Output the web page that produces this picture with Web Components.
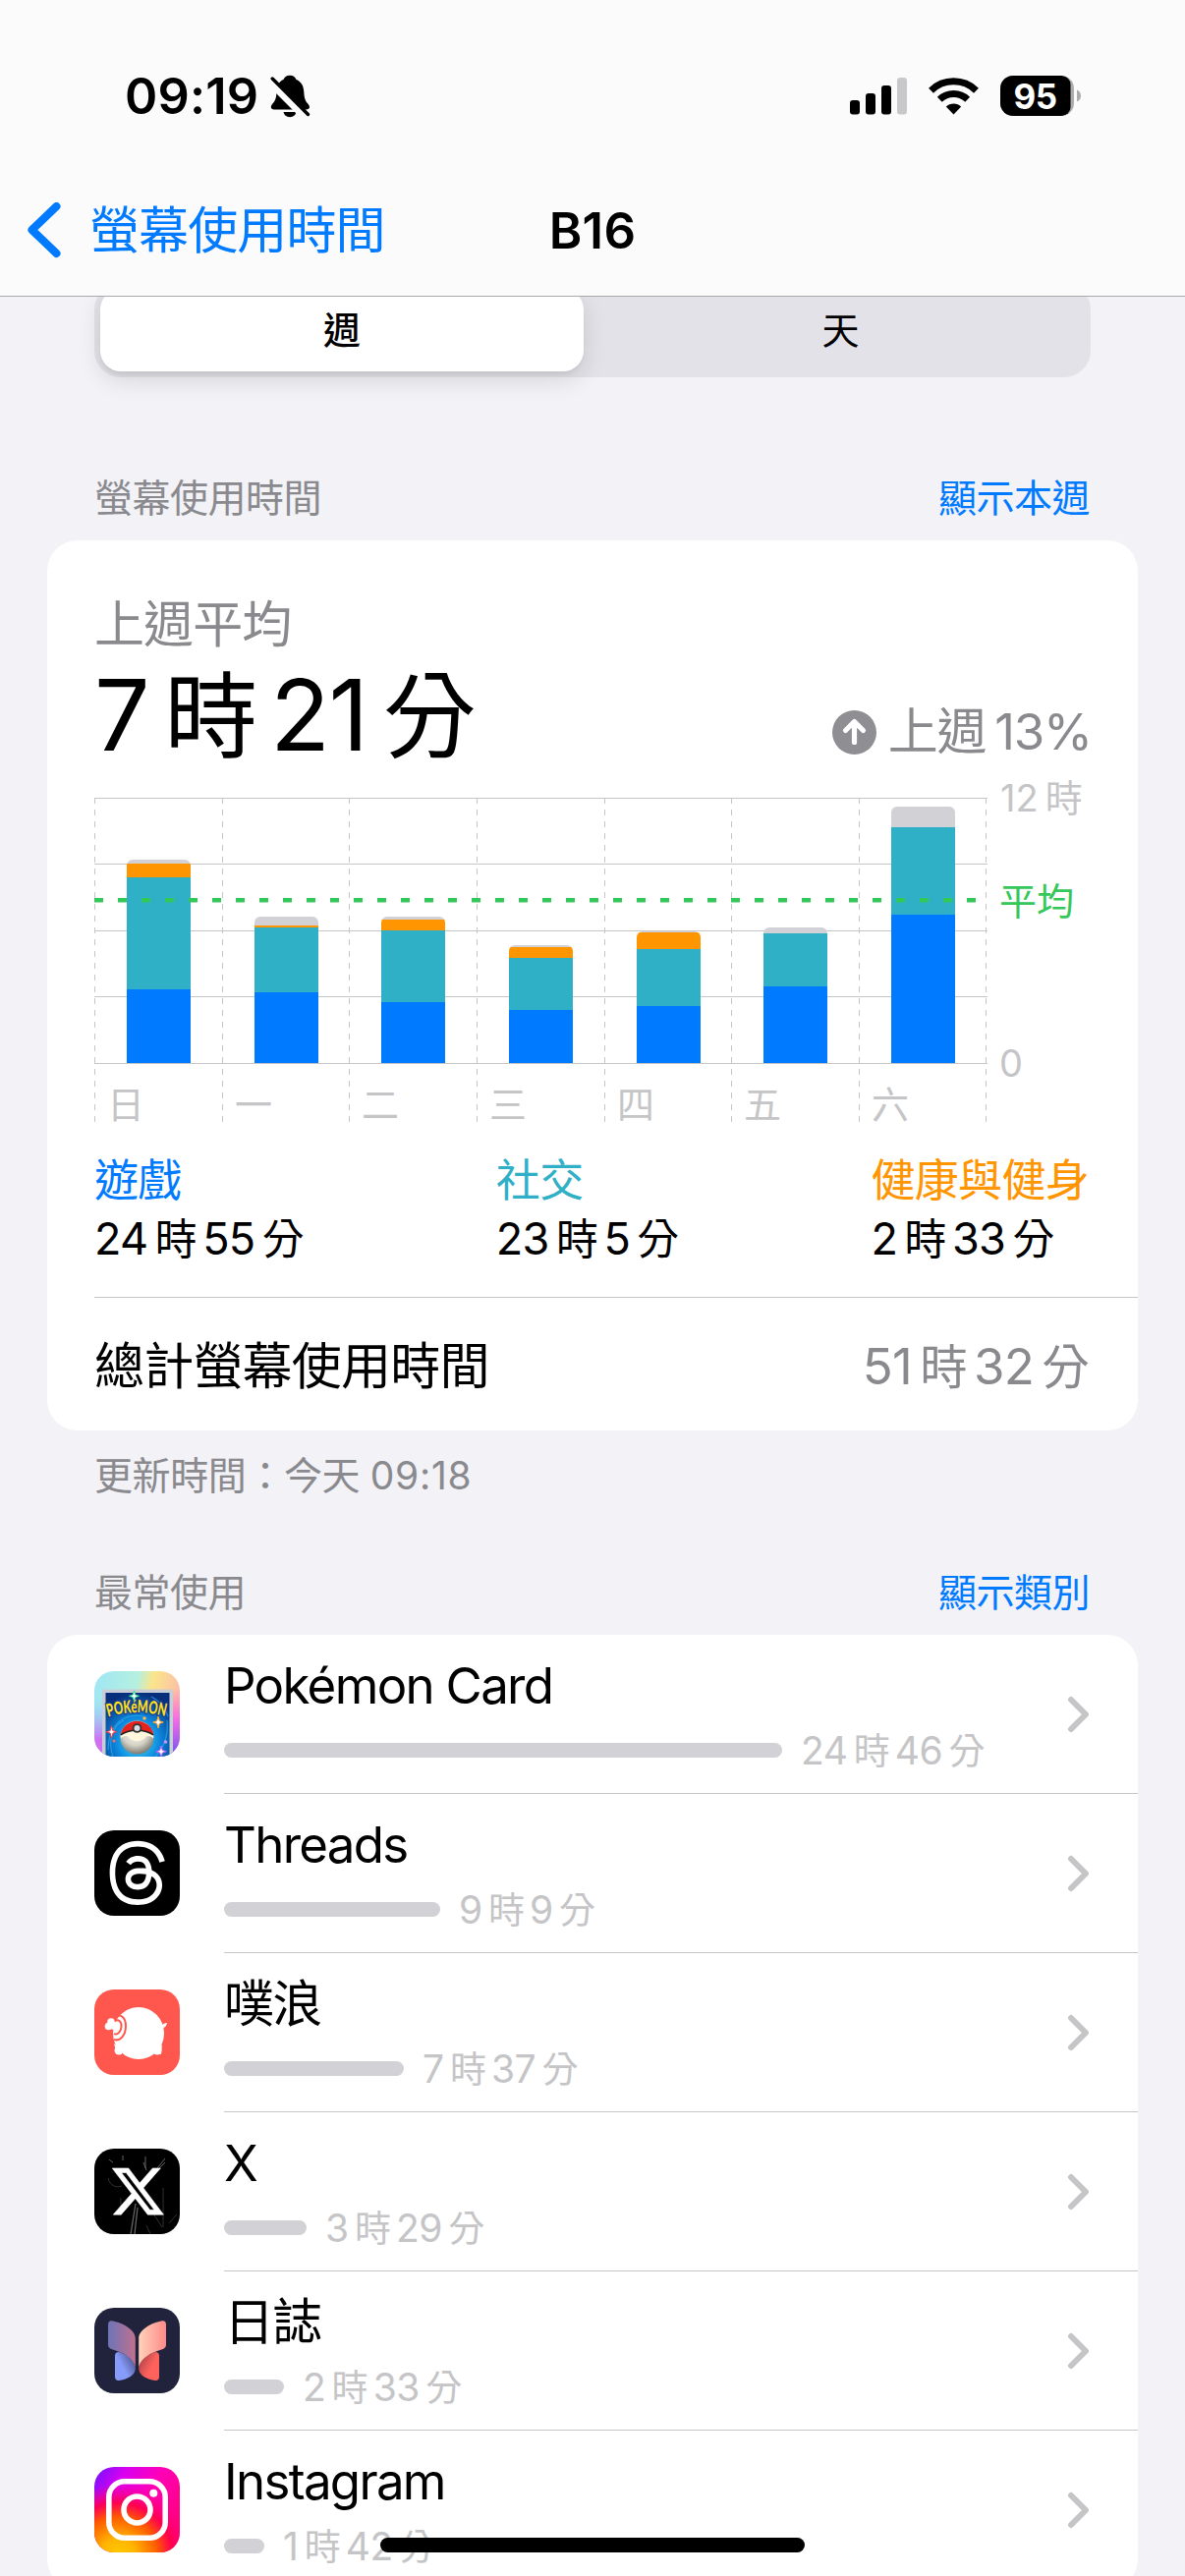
<!DOCTYPE html>
<html lang="zh-Hant">
<head>
<meta charset="utf-8">
<title>B16</title>
<style>
    :root {
        --blue: #007aff;
        --teal: #30b0c7;
        --orange: #ff9500;
        --green: #34c759;
        --fill: #d1d1d6;
        --label: #000;
        --secondary: #8a8a8e;
        --tertiary: #c5c5c7;
        --separator: #c6c6c8;
    }

    body {
        margin: 0;
        width: 1206px;
        height: 2622px;
        overflow: hidden;
        background: #f2f2f7;
        color: var(--label);
        font-family: Inter, "Noto Sans CJK TC", sans-serif;
        font-size: 51px;
        -webkit-font-smoothing: antialiased;
    }
</style>
</head>
<body>
<screen-time-page></screen-time-page>

<script>
/**
 * Base class: attaches an open shadow root and fills it with render()
 */
class BaseElement extends HTMLElement {
    constructor() {
        super();
        this.attachShadow({ mode: 'open' });
    }

    connectedCallback() {
        this.shadowRoot.innerHTML = this.render();
    }
}

/**
 * Duration such as 7時21分, with a little air round the units
 */
class DurationText extends BaseElement {
    render() {
        const [hours, minutes] = this.getAttribute('value').split(':');
        return `
            <style>
                :host { display: block; white-space: nowrap; }
                .unit { font-size: 0.95em; line-height: 1; margin: 0 0.15em 0 0.17em; }
                .unit:last-child { margin-right: 0; }
            </style>${hours}<span class="unit">時</span>${minutes}<span class="unit">分</span>`;
    }
}

class StatusBar extends BaseElement {
    render() {
        return `
            <style>
                :host {
                    display: flex;
                    justify-content: space-between;
                    align-items: center;
                    height: 195px;
                    padding: 0 106px 0 127px;
                    box-sizing: border-box;
                }
                .left, .right { display: flex; align-items: center; }
                .left { gap: 12px; }
                .time { font-weight: 600; font-size: 50.500px; line-height: 60px; letter-spacing: 0.200px; }
                .right { gap: 22px; }
                svg { display: block; }
                .battery { font: 700 35px Inter, sans-serif; letter-spacing: -0.5px; }
            </style>
            <div class="left">
                <span class="time">09:19</span>
                <svg width="41" height="44" viewBox="0 0 41 44">
                    <path d="M20 .8c3.600 0 5.800 2 6.500 4.300 5 2 7.500 6.200 7.800 12.400.3 7 1.700 9.500 4.200 12.300 2.700 3.200 1.500 5.700-2 5.700H4.200c-3.500 0-4.500-2.500-2-5.700 2.600-2.800 4-5.300 4.200-12.300C6.700 11.300 8.600 7.100 13.500 5.100 14.200 2.800 16.400.8 20 .8z"/>
                    <path d="M13.500 38h13c-.6 3-3 5.200-6.500 5.200s-5.900-2.200-6.500-5.200z"/>
                    <path d="M-.8 6.500L37.500 44.800" stroke="#fbfbfc" stroke-width="8"/>
                    <path d="M2.200 4L38.500 40.500" stroke="#000" stroke-width="3.400" stroke-linecap="round"/>
                </svg>
            </div>
            <div class="right">
                <svg width="58" height="38" viewBox="0 0 58 38">
                    <rect x="0" y="23" width="10" height="14.500" rx="3"/>
                    <rect x="16" y="16" width="10" height="21.500" rx="3"/>
                    <rect x="32" y="8" width="10" height="29.500" rx="3"/>
                    <rect x="48" y="0" width="10" height="37.500" rx="3" fill="#c8c8ca"/>
                </svg>
                <svg width="51" height="38" viewBox="0 0 51 38">
                    <g fill="none" stroke="#000" stroke-width="7">
                        <path d="M2.500 13.200a33 33 0 0 1 46 0"/>
                        <path d="M11.300 22.300a20.500 20.500 0 0 1 28.400 0"/>
                    </g>
                    <path d="M25.500 37.500L17.800 29.600a11 11 0 0 1 15.400 0z"/>
                </svg>
                <svg class="battery" width="82" height="42" viewBox="0 0 82 42">
                    <clipPath id="cell"><rect width="75" height="41" rx="13"/></clipPath>
                    <g clip-path="url(#cell)">
                        <rect width="75" height="41" fill="#acacae"/>
                        <rect x="-20" width="91.500" height="41" rx="9"/>
                    </g>
                    <path d="M78 14.500c2.500 1 4 3.200 4 6s-1.500 5-4 6z" fill="#acacae"/>
                    <text x="35.500" y="33.500" text-anchor="middle" fill="#fff">95</text>
                </svg>
            </div>`;
    }
}

class NavBar extends BaseElement {
    render() {
        return `
            <style>
                :host {
                    display: grid;
                    grid-template-columns: 1fr auto 1fr;
                    align-items: center;
                    height: 106px;
                    padding: 0 27px 26px;
                    box-sizing: border-box;
                    line-height: 60px;
                }
                .back { display: flex; align-items: center; gap: 29px; color: var(--blue); letter-spacing: -0.9px; }
                .title { font-weight: 600; letter-spacing: 0.300px; }
                svg { display: block; }
            </style>
            <div class="back">
                <svg width="35" height="58" viewBox="0 0 35 58">
                    <path d="M30.500 4L5.500 28 30.500 52" fill="none" stroke="currentColor" stroke-width="8" stroke-linecap="round" stroke-linejoin="round"/>
                </svg>
                <slot name="back"></slot>
            </div>
            <div class="title"><slot></slot></div>`;
    }
}

class SegmentedControl extends BaseElement {
    render() {
        return `
            <style>
                :host {
                    display: grid;
                    grid-template-columns: 492px 1fr;
                    height: 96px;
                    padding: 6px;
                    box-sizing: border-box;
                    border-radius: 27px;
                    background: #e3e2e8;
                    font-size: 38px;
                    line-height: 84px;
                    text-align: center;
                }
                .segment { margin-left: 13px; }
                .selected {
                    border-radius: 21px;
                    background: #fff;
                    box-shadow: 0 9px 24px rgba(0, 0, 0, 0.12), 0 3px 3px rgba(0, 0, 0, 0.04);
                    font-weight: 500;
                }
            </style>
            <div class="selected"><slot name="selected"></slot></div>
            <div class="segment"><slot></slot></div>`;
    }
}

class SectionHeader extends BaseElement {
    render() {
        return `
            <style>
                :host {
                    display: flex;
                    justify-content: space-between;
                    padding: 0 97px 13px 96px;
                    font-size: 39px;
                    line-height: 60px;
                    letter-spacing: -0.5px;
                    color: var(--secondary);
                }
                .link { color: var(--blue); }
            </style>
            <slot></slot>
            <span class="link"><slot name="link"></slot></span>`;
    }
}

class GroupCard extends BaseElement {
    render() {
        return `
            <style>
                :host {
                    display: block;
                    margin: 0 48px;
                    border-radius: 31px;
                    background: #fff;
                    overflow: hidden;
                }
            </style>
            <slot></slot>`;
    }
}

/**
 * Stacked bars for one week. Each day lists the tops of its segments
 * in pixels above the baseline: games, social, health, other.
 */
class WeekChart extends BaseElement {
    render() {
        const days = [
            ['日', 75, 189, 203, 207],
            ['一', 72, 138, 140, 149],
            ['二', 62, 135, 146, 149],
            ['三', 54, 107, 118, 120],
            ['四', 58, 116, 133, 134],
            ['五', 78, 132, 132, 138],
            ['六', 151, 240, 240, 261]
        ];
        const colors = ['var(--blue)', 'var(--teal)', 'var(--orange)', 'var(--fill)'];
        const base = 295;
        const step = 129.64;

        const rows = [25, 92, 160, 227, 295]
            .map((y) => `<path d="M0 ${y + 0.5}H909"/>`).join('');
        const columns = Array.from({ length: 8 }, (_, i) => {
            const x = Math.round(i * step) + 0.5;
            return `<path d="M${x} 25V355" stroke-dasharray="6 6"/>`;
        }).join('');

        const bars = days.map(([name, ...tops], i) => {
            const x = Math.round(i * step) + 33;
            const height = tops[3];
            const parts = tops.map((top, n) => {
                const from = n ? tops[n - 1] : 0;
                return `<rect x="${x}" y="${base - top}" width="65" height="${top - from}" fill="${colors[n]}"/>`;
            }).join('');
            return `
                <clipPath id="bar${i}"><rect x="${x}" y="${base - height}" width="65" height="${height + 8}" rx="6"/></clipPath>
                <g clip-path="url(#bar${i})">${parts}</g>
                <text x="${x - 20}" y="351">${name}</text>`;
        }).join('');

        return `
            <style>
                :host { display: block; height: 360px; }
                svg { display: block; font-size: 38px; fill: var(--tertiary); }
                .average { fill: var(--green); }
            </style>
            <svg width="1062" height="360" viewBox="0 0 1062 360">
                <g stroke="var(--separator)">${rows}${columns}</g>
                ${bars}
                <path d="M0 129.200H900" stroke="var(--green)" stroke-width="4.500" stroke-dasharray="9 15"/>
                <text x="922" y="39">12<tspan dx="7">時</tspan></text>
                <text x="921" y="144" class="average">平均</text>
                <text x="921" y="309">0</text>
            </svg>`;
    }
}

class CategoryTotal extends BaseElement {
    render() {
        return `
            <style>
                :host { display: block; font-size: 45px; }
                .name { line-height: 54px; margin-bottom: 2px; letter-spacing: -0.7px; color: var(--category); }
                duration-text { line-height: 60px; letter-spacing: -0.7px; }
            </style>
            <div class="name"><slot></slot></div>
            <duration-text value="${this.getAttribute('value')}"></duration-text>`;
    }
}

class UsageSummary extends BaseElement {
    render() {
        return `
            <style>
                :host { display: block; padding: 56px 0 0 48px; }
                .caption { line-height: 60px; letter-spacing: -0.9px; color: var(--secondary); }
                .headline {
                    display: flex;
                    justify-content: space-between;
                    align-items: flex-end;
                    height: 121px;
                    padding-right: 47px;
                }
                .average { font-size: 100px; line-height: 118px; letter-spacing: -1.500px; }
                .trend {
                    display: flex;
                    align-items: center;
                    gap: 12px;
                    margin-bottom: 12px;
                    line-height: 60px;
                    letter-spacing: -1.200px;
                    color: var(--secondary);
                }
                .trend b { font-weight: 400; margin-left: 9px; }
                .totals {
                    display: flex;
                    justify-content: space-between;
                    padding-right: 50px;
                    margin: 28px 0 29px;
                }
                .total {
                    display: flex;
                    justify-content: space-between;
                    height: 136px;
                    padding: 4px 50px 0 0;
                    box-sizing: border-box;
                    border-top: 1px solid var(--separator);
                    line-height: 132px;
                    letter-spacing: -0.8px;
                }
                .total duration-text { color: var(--secondary); }
            </style>
            <div class="caption">上週平均</div>
            <div class="headline">
                <duration-text class="average" value="7:21"></duration-text>
                <div class="trend">
                    <svg width="45" height="45" viewBox="0 0 45 45">
                        <circle cx="22.500" cy="22.500" r="22.500" fill="#8e8e93"/>
                        <path d="M22.500 32.500V12M13.500 20.500l9-9 9 9" fill="none" stroke="#fff" stroke-width="5.200" stroke-linecap="round" stroke-linejoin="round"/>
                    </svg>
                    <span>上週<b>13%</b></span>
                </div>
            </div>
            <week-chart></week-chart>
            <div class="totals">
                <category-total value="24:55" style="--category: var(--blue)">遊戲</category-total>
                <category-total value="23:5" style="--category: var(--teal)">社交</category-total>
                <category-total value="2:33" style="--category: var(--orange)">健康與健身</category-total>
            </div>
            <div class="total">
                <span>總計螢幕使用時間</span>
                <duration-text value="51:32"></duration-text>
            </div>`;
    }
}

const ICONS = {
    pokemon: `
        <defs>
            <linearGradient id="holo" x1="0" y1="0" x2="1" y2="0.200">
                <stop offset="0" stop-color="#9fe6f5"/><stop offset="0.500" stop-color="#b4f0e0"/>
                <stop offset="0.680" stop-color="#fbe58a"/><stop offset="1" stop-color="#fbc0a8"/>
            </linearGradient>
            <linearGradient id="edge" x1="0" y1="0" x2="0" y2="1">
                <stop offset="0.200" stop-color="#ff5fd0" stop-opacity="0"/><stop offset="0.550" stop-color="#f05cf0" stop-opacity="0.800"/>
                <stop offset="1" stop-color="#6a50f0"/>
            </linearGradient>
            <linearGradient id="edge2" x1="0" y1="0" x2="0" y2="1">
                <stop offset="0.300" stop-color="#7fd0ff" stop-opacity="0"/><stop offset="0.800" stop-color="#d070f0"/>
            </linearGradient>
            <radialGradient id="sky" cx="0.500" cy="0.700" r="0.700">
                <stop offset="0" stop-color="#3fe0ff"/><stop offset="0.500" stop-color="#0d86dc"/><stop offset="1" stop-color="#08307c"/>
            </radialGradient>
            <radialGradient id="ball" cx="0.450" cy="0.350" r="0.700">
                <stop offset="0" stop-color="#fff"/><stop offset="0.550" stop-color="#d5d2c6"/><stop offset="1" stop-color="#6d6a62"/>
            </radialGradient>
        </defs>
        <rect width="87" height="87" fill="url(#holo)"/>
        <rect width="12" height="87" fill="url(#edge2)"/>
        <rect x="74" width="13" height="87" fill="url(#edge)"/>
        <rect x="8" y="18.500" width="72" height="75" rx="3" fill="#c9ced6"/>
        <rect x="11.500" y="22" width="65" height="70" fill="url(#sky)"/>
        <g fill="none" stroke="#35b8f5" stroke-width="1.200" opacity="0.600">
            <path d="M14 80C14 55 30 42 50 46"/><path d="M74 50C76 70 68 80 60 90"/><path d="M20 90C12 70 20 55 30 50"/><path d="M58 26c8 4 14 10 17 20"/>
        </g>
        <circle cx="43.500" cy="67.500" r="17" fill="url(#ball)"/>
        <path d="M26.800 64.500a17 17 0 0 1 33.400 0c-8-5.500-25-5.500-33.400 0z" fill="#e8221c"/>
        <path d="M26.600 65.500c8-6.500 26-6.500 33.800 0l-.3 3c-4-3-6-3-8-1-5 5-12 5-17 0-2-2-5-2-8.200 1z" fill="#fff8dc"/>
        <path d="M26.800 65c8-6.500 25-6.500 33.400 0" fill="none" stroke="#222" stroke-width="1.500"/>
        <circle cx="43.500" cy="58" r="4.800" fill="#333"/><circle cx="43.500" cy="58" r="3" fill="#d8dee4"/>
        <path id="arc" d="M14 46.500Q43 38 74 46.500" fill="none"/>
        <text font-family="Lato, sans-serif" font-weight="900" font-size="18" fill="#ffdf1c" stroke="#173a8c" stroke-width="2.400" paint-order="stroke" textLength="59" lengthAdjust="spacingAndGlyphs"><textPath href="#arc" textLength="59" lengthAdjust="spacingAndGlyphs">POKéMON</textPath></text>
        <g fill="#fff" stroke-width="1">
            <path d="M40.500 20l1.300 4 3.700 1.300-3.700 1.300-1.300 4-1.300-4-3.700-1.300 3.700-1.300z" stroke="#2bd98a"/>
            <path d="M65 46l1.300 4.700 4 1.300-4 1.300-1.300 4.700-1.300-4.700-4-1.300 4-1.300z" stroke="#ffa51f"/>
            <path d="M17.500 55.500l1.300 5 4 1.300-4 1.300-1.300 5-1.300-5-4-1.300 4-1.300z" stroke="#ff3a3a"/>
            <path d="M68 76l1.300 4.500 4 1.300-4 1.300-1.300 4.500-1.300-4.500-4-1.300 4-1.300z" stroke="#c15cff"/>
        </g>
        <circle cx="72.500" cy="72" r="1.800" fill="#d98cff"/><circle cx="51" cy="48" r="1.800" fill="#ffb74a"/><circle cx="20" cy="71" r="1.500" fill="#ff6a6a"/>`,
    threads: `
        <rect width="87" height="87"/>
        <path transform="translate(11.200 10.700) scale(0.340)" fill="#fff" d="M141.537 88.988a66.667 66.667 0 0 0-2.518-1.143c-1.482-27.307-16.403-42.940-41.457-43.100h-.34c-14.986 0-27.449 6.396-35.120 18.036l13.779 9.452c5.730-8.695 14.724-10.548 21.348-10.548h.229c8.249.053 14.474 2.452 18.503 7.129 2.932 3.405 4.893 8.111 5.864 14.050-7.314-1.243-15.224-1.626-23.680-1.140-23.820 1.371-39.134 15.264-38.105 34.568.522 9.792 5.400 18.216 13.735 23.719 7.047 4.652 16.124 6.927 25.557 6.412 12.458-.683 22.231-5.436 29.049-14.127 5.178-6.600 8.453-15.153 9.899-25.930 5.937 3.583 10.337 8.298 12.767 13.966 4.132 9.635 4.373 25.468-8.546 38.376-11.319 11.308-24.925 16.200-45.488 16.351-22.809-.169-40.060-7.484-51.275-21.742C35.236 139.966 29.808 120.682 29.605 96c.203-24.682 5.630-43.966 16.133-57.317C56.954 24.425 74.204 17.110 97.013 16.940c22.975.171 40.526 7.521 52.171 21.848 5.710 7.026 10.015 15.861 12.853 26.162l16.147-4.308c-3.440-12.680-8.853-23.606-16.219-32.668C147.036 9.607 125.202.195 97.070 0h-.113C68.882.194 47.292 9.642 32.788 28.079 19.882 44.486 13.224 67.316 13.001 95.933L13 96l.001.068c.223 28.616 6.881 51.446 19.787 67.853C47.292 182.358 68.882 191.806 96.957 192h.113c24.960-.173 42.554-6.708 57.048-21.189 18.963-18.945 18.392-42.692 12.142-57.270-4.484-10.454-13.033-18.945-24.723-24.553zM98.440 129.507c-10.440.588-21.286-4.098-21.820-14.135-.397-7.442 5.296-15.746 22.461-16.735 1.966-.113 3.895-.169 5.790-.169 6.235 0 12.135.606 17.500 1.765-2.001 24.989-13.743 28.713-23.931 29.274z"/>`,
    plurk: `
        <rect width="87" height="87" fill="#ff574d"/>
        <g fill="#fff">
            <ellipse cx="45" cy="44.500" rx="26" ry="26.500"/>
            <path d="M68 36c2 0 3-2 6-2-.5 3-2 5-5 5zM20 55l3 11 8-3zM69 56l-1 10-8-2z"/>
            <circle cx="25" cy="62" r="4.500"/><circle cx="64" cy="62" r="4.500"/>
            <circle cx="17" cy="33" r="3.800"/><circle cx="14.500" cy="37.500" r="3.800"/><circle cx="20" cy="37" r="4"/>
        </g>
        <g fill="none" stroke="#ff574d" stroke-width="2">
            <path d="M21 28c6-4 11 1 11 9 0 9-5 16-12 14"/>
            <path d="M21 32c4-2 7 1 6.500 6-.4 5-4 9-7.500 7"/>
        </g>
        <ellipse cx="22.500" cy="38" rx="2.500" ry="3.500" fill="#fff"/>`,
    x: `
        <rect width="87" height="87"/>
        <g stroke="#8d8d88" fill="none" opacity="0.700">
            <path d="M42 56l-5 31M44 60l-3 27" stroke-width="1.300"/>
            <path d="M52 8v12M50 14l3 8M29 7v5M15 11l4 3M72 10L56 30M66 20l6-6" stroke-width="1"/>
            <path d="M70 40v40M60 66l9 14M76 76l8-9M53 78l4 9M27 50v18M14 30c2 8 8 10 14 8" stroke-width="0.500"/>
        </g>
        <path transform="translate(15.200 14.500) scale(2.420)" fill="#fff" stroke="#fff" stroke-width="0.250" d="M18.244 2.250h3.308l-7.227 8.260 8.502 11.240H16.170l-5.214-6.817L4.990 21.750H1.680l7.730-8.835L1.254 2.250H8.080l4.713 6.231zm-1.161 17.520h1.833L7.084 4.126H5.117z"/>`,
    journal: `
        <defs>
            <linearGradient id="ul"><stop offset="0" stop-color="#6d74b8"/><stop offset="1" stop-color="#c0708f"/></linearGradient>
            <linearGradient id="ur"><stop offset="0" stop-color="#ffd2ba"/><stop offset="1" stop-color="#ff8a88"/></linearGradient>
            <linearGradient id="ll" x1="0.200" y1="0.800" x2="1" y2="0.200"><stop offset="0.300" stop-color="#879bfa"/><stop offset="1" stop-color="#4a4f86"/></linearGradient>
            <linearGradient id="lr" x1="0.800" y1="0.800" x2="0" y2="0.200"><stop offset="0.300" stop-color="#ff625c"/><stop offset="1" stop-color="#a84048"/></linearGradient>
        </defs>
        <rect width="87" height="87" fill="#20233b"/>
        <path fill="url(#ll)" d="M25 45c9 3 16.800 9 16.800 16.500S33 73 25 74q-4 .3-4-4V49q0-4 4-4z"/>
        <path fill="url(#lr)" d="M62 45c-9 3-16.800 9-16.800 16.500S54 73 62 74q4 .3 4-4V49q0-4-4-4z"/>
        <path fill="url(#ul)" d="M18 13.200C28 15 41.800 22 41.800 31v29C39 51 31 46 16.500 41.700Q14 40.800 14 38V17q0-4.200 4-3.800z"/>
        <path fill="url(#ur)" d="M69 13.200C59 15 45.200 22 45.200 31v29C48 51 56 46 70.500 41.700Q73 40.800 73 38V17q0-4.200-4-3.800z"/>`,
    instagram: `
        <defs>
            <linearGradient id="ig" x1="0" y1="0" x2="1" y2="0.600">
                <stop offset="0" stop-color="#6a14ff"/><stop offset="0.280" stop-color="#d800f0"/>
                <stop offset="0.600" stop-color="#ff00b8"/><stop offset="1" stop-color="#ff0080"/>
            </linearGradient>
            <radialGradient id="sun" cx="0.280" cy="1.050" r="0.850">
                <stop offset="0" stop-color="#ffcc00"/><stop offset="0.250" stop-color="#ffb400"/>
                <stop offset="0.550" stop-color="#ff5a00"/><stop offset="0.750" stop-color="#ff0048" stop-opacity="0.900"/>
                <stop offset="1" stop-color="#ff0080" stop-opacity="0"/>
            </radialGradient>
        </defs>
        <rect width="87" height="87" fill="url(#ig)"/>
        <rect width="87" height="87" fill="url(#sun)"/>
        <g fill="none" stroke="#fff" stroke-width="5.600">
            <rect x="14.800" y="14.800" width="57.400" height="57.400" rx="16"/>
            <circle cx="43.500" cy="43.500" r="13.500"/>
        </g>
        <circle cx="60.300" cy="26.700" r="4" fill="#fff"/>`
};

class AppRow extends BaseElement {
    render() {
        return `
            <style>
                :host { display: flex; height: 162px; padding-left: 48px; }
                .icon { display: block; margin-top: 37px; border-radius: 20px; }
                .body {
                    flex: 1;
                    display: flex;
                    justify-content: space-between;
                    align-items: center;
                    margin-left: 45px;
                    padding-right: 49px;
                    border-bottom: 1px solid var(--separator);
                }
                .text { margin-top: 8px; }
                .name { line-height: 62px; margin-top: 4px; letter-spacing: -1.700px; }
                .usage {
                    display: flex;
                    align-items: center;
                    gap: 19px;
                    height: 69px;
                    line-height: 68px;
                    color: var(--tertiary);
                    font-size: 39px;
                    letter-spacing: -0.5px;
                }
                .bar { height: 15px; border-radius: 8px; background: var(--fill); }
            </style>
            <svg class="icon" width="87" height="87" viewBox="0 0 87 87">${ICONS[this.getAttribute('icon')]}</svg>
            <div class="body">
                <div class="text">
                    <div class="name"><slot></slot></div>
                    <div class="usage">
                        <div class="bar" style="width: ${this.getAttribute('bar')}px"></div>
                        <duration-text value="${this.getAttribute('value')}"></duration-text>
                    </div>
                </div>
                <svg width="23" height="38" viewBox="0 0 23 38">
                    <path d="M4 4l15 15L4 34" fill="none" stroke="#c5c5c7" stroke-width="6" stroke-linecap="round" stroke-linejoin="round"/>
                </svg>
            </div>`;
    }
}

class ScreenTimePage extends BaseElement {
    render() {
        return `
            <style>
                :host { display: block; }
                header {
                    position: relative;
                    z-index: 1;
                    height: 302px;
                    box-sizing: border-box;
                    border-bottom: 1px solid #a9a9ad;
                    background: #fbfbfc;
                }
                segmented-control { margin: -14px 96px 93px; }
                .updated {
                    padding: 22px 96px 65px;
                    font-size: 39px;
                    line-height: 48px;
                    letter-spacing: -0.4px;
                    color: var(--secondary);
                }
                .clock { letter-spacing: 0.700px; }
                .home {
                    position: absolute;
                    z-index: 2;
                    left: 387px;
                    top: 2583px;
                    width: 432px;
                    height: 15px;
                    border-radius: 8px;
                    background: #000;
                }
            </style>
            <header>
                <status-bar></status-bar>
                <nav-bar><span slot="back">螢幕使用時間</span>B16</nav-bar>
            </header>
            <segmented-control><span slot="selected">週</span>天</segmented-control>
            <section-header>螢幕使用時間<span slot="link">顯示本週</span></section-header>
            <group-card><usage-summary></usage-summary></group-card>
            <div class="updated">更新時間：今天 <span class="clock">09:18</span></div>
            <section-header>最常使用<span slot="link">顯示類別</span></section-header>
            <group-card>
                <app-row icon="pokemon" bar="568" value="24:46">Pokémon Card</app-row>
                <app-row icon="threads" bar="220" value="9:9">Threads</app-row>
                <app-row icon="plurk" bar="183" value="7:37">噗浪</app-row>
                <app-row icon="x" bar="84" value="3:29">X</app-row>
                <app-row icon="journal" bar="61" value="2:33">日誌</app-row>
                <app-row icon="instagram" bar="41" value="1:42">Instagram</app-row>
            </group-card>
            <div class="home"></div>`;
    }
}

customElements.define('duration-text', DurationText);
customElements.define('status-bar', StatusBar);
customElements.define('nav-bar', NavBar);
customElements.define('segmented-control', SegmentedControl);
customElements.define('section-header', SectionHeader);
customElements.define('group-card', GroupCard);
customElements.define('week-chart', WeekChart);
customElements.define('category-total', CategoryTotal);
customElements.define('usage-summary', UsageSummary);
customElements.define('app-row', AppRow);
customElements.define('screen-time-page', ScreenTimePage);
</script>
</body>
</html>
